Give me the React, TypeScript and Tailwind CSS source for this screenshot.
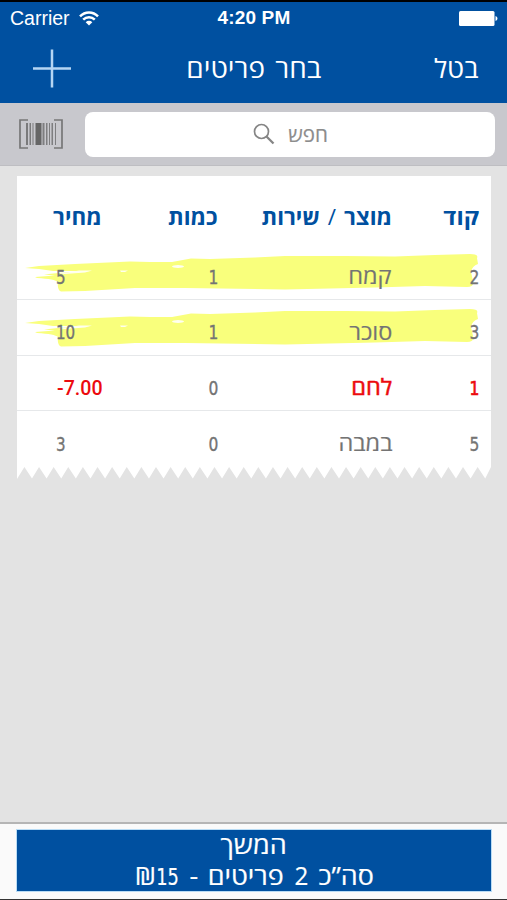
import React from "react";

type Item = { code: string; name: string; qty: string; price: string; marked?: boolean; negative?: boolean };

const items: Item[] = [
  { code: "2", name: "קמח", qty: "1", price: "5", marked: true },
  { code: "3", name: "סוכר", qty: "1", price: "10", marked: true },
  { code: "1", name: "לחם", qty: "0", price: "-7.00", negative: true },
  { code: "5", name: "במבה", qty: "0", price: "3" },
];

const GRID = "grid grid-cols-[87px_174px_117px_1fr] items-center pr-[12px]";
const DIGITS = "relative top-px inline-block font-['DejaVu_Sans_Condensed','DejaVu_Sans',sans-serif] text-[20px]";

function StatusBar() {
  return (
    <div dir="ltr" className="flex h-[32px] items-center justify-between pl-[10px] pr-[9px] pt-px font-['Liberation_Sans',Arial,sans-serif] text-white">
      <div className="flex w-[160px] items-center gap-[9px]">
        <span className="text-[19.5px]">Carrier</span>
        <svg width="20" height="15" viewBox="0 0 20 15" fill="none" stroke="white" strokeWidth="2.5">
          <path d="M1 5.300C6 .1 14 .1 19 5.300" />
          <path d="M4.200 8.700c3.300-3.200 8.300-3.200 11.600 0" />
          <path d="M6.700 11.200c1.900-1.800 4.700-1.800 6.600 0L10 14.600Z" fill="white" stroke="none" />
        </svg>
      </div>
      <span className="text-[19px] font-bold tracking-[0.15px]">4:20 PM</span>
      <div className="flex w-[160px] items-center justify-end">
        <svg width="39" height="15" viewBox="0 0 39 15" fill="white">
          <rect x="0" y="0" width="35.5" height="15" rx="1.5" />
          <path d="M36.500 5c2.600 1 2.600 4 0 5Z" />
        </svg>
      </div>
    </div>
  );
}

function Highlight() {
  return (
    <svg className="absolute left-[8px] top-[9px]" width="456" height="40" viewBox="0 0 456 40">
      <path
        fill="#f9ff7c"
        d="M0 14 L14 12 L50 10 L105 7.5 L125 8 L147 8 L166 4.5 L185 5 L230 3.5 L260 2 L320 2 L370 2.5 L410 1 L445 0 Q454 0 452 4 L453 10 Q447 12 446 18 L448 27 Q449 33 442 33 L400 32 L350 33.5 L260 35.5 L160 34 L110 34 L60 37 L36 37.5 Q32 36 33 28 Q30 25 12 24 L10 23 L30 21.5 L19 20.5 L33 19 L66 17 L28 17 L14 15 Z"
      />
      <g fill="#fffff0">
        <ellipse cx="153" cy="12.5" rx="6" ry="1.5" />
        <path d="M36 19.500 54 16.500 67 16.500 60 18.500 33 20.500ZM95 16.500h8l-3 1.500h-4Z" />
      </g>
    </svg>
  );
}

function Row({ item }: { item: Item }) {
  const color = item.negative ? "text-[#ec0a0e]" : "text-[#747474]";
  return (
    <div className={`relative h-[55.5px] border-b border-[#e6e8ea] last:border-b-0 ${color}`}>
      {item.marked && <Highlight />}
      <div className={`${GRID} relative h-full pt-[9px] leading-[28px]`}>
        <span>
          <span className={`${DIGITS} origin-right scale-x-[.86] ${item.negative ? "[-webkit-text-stroke:0.7px]" : "[-webkit-text-stroke:0.35px]"}`}>{item.code}</span>
        </span>
        <span className={`text-[22px] ${item.negative ? "[-webkit-text-stroke:0.5px]" : "[-webkit-text-stroke:0.15px]"}`}>
          <span className="relative -top-px inline-block origin-right scale-x-[1.07]">{item.name}</span>
        </span>
        <span className="text-[#747474]">
          <span className={`${DIGITS} origin-right scale-x-[.86] [-webkit-text-stroke:0.35px]`}>{item.qty}</span>
        </span>
        <span dir="ltr" className="ml-[40px] whitespace-nowrap text-left">
          {item.negative ? (
            <span className="relative top-px -mr-[20px] inline-block origin-left scale-x-[.98] font-[Roboto] text-[20px] font-medium">{item.price}</span>
          ) : (
            <span className={`${DIGITS} -ml-px origin-left scale-x-[.84] [-webkit-text-stroke:0.35px]`}>{item.price}</span>
          )}
        </span>
      </div>
    </div>
  );
}

export default function App() {
  return (
    <div dir="rtl" className="flex h-[900px] w-[507px] flex-col overflow-hidden border-b border-b-[#333] bg-[#e3e3e3] font-['Open_Sans','Liberation_Sans',sans-serif]">
      <header className="h-[103px] shrink-0 border-t-2 border-t-black bg-[#0050a0] text-white">
        <StatusBar />
        <div className="grid h-[69px] grid-cols-3 items-center px-[29px] text-[26px]">
          <button className="text-right"><span className="inline-block origin-right scale-x-[1.05]">בטל</span></button>
          <h1 className="scale-x-[1.07] text-center whitespace-nowrap [word-spacing:3px]">בחר פריטים</h1>
          <svg className="mr-auto ml-[3px]" width="40" height="40" viewBox="0 0 40 40" stroke="#b5d5f3" strokeWidth="2.5">
            <path d="M1 19.500h38M20 .5v38" />
          </svg>
        </div>
      </header>

      <div className="flex h-[63px] shrink-0 items-center gap-[21px] border-b border-[#bebec2] bg-[#c8c8cd] pr-[12px] pl-[18px]">
        <div className="flex h-[45px] flex-1 items-center justify-center gap-[13px] rounded-[8px] bg-white pl-px text-[#8c8c8c]">
          <span className="text-[20.5px] [-webkit-text-stroke:0.2px]">חפש</span>
          <svg width="22" height="22" viewBox="0 0 22 22" fill="none" stroke="#858585" strokeWidth="1.7">
            <circle cx="8.5" cy="8.5" r="7" />
            <path d="m13.500 13.500 7 7" strokeWidth="2.3" />
          </svg>
        </div>
        <svg width="46" height="32" viewBox="0 0 46 32" fill="none" stroke="#777">
          <path d="M10 2H2v28h8M36 2h8v28h-8" strokeWidth="1.7" />
          <g fill="#666" stroke="none">
            <path d="M8 5h2v22H8zM11.500 5h1.500v22h-1.500zM14.500 5h1v22h-1z" opacity=".8" />
            <path d="M17.500 5h6v22h-6z" />
            <path d="M24.500 5h2v22h-2zM28 5h1.500v22H28zM31 5h1v22h-1zM33.500 5h1.500v22h-1.500zM37 5h1v22h-1z" opacity=".75" />
          </g>
        </svg>
      </div>

      <main className="flex-1 px-[16px] pt-[9.500px] pl-[17px]">
        <section>
          <div className="bg-white">
            <div className={`${GRID} h-[69px] pt-[13px] text-[22px] font-bold text-[#0050a0] whitespace-nowrap`}>
              <span><span className="inline-block origin-right scale-x-[1.08]">קוד</span></span>
              <span><span className="inline-block origin-right scale-x-[1.02] [word-spacing:2px]">מוצר <span className="font-normal">/</span> שירות</span></span>
              <span><span className="inline-block origin-right scale-x-[1.02]">כמות</span></span>
              <span><span className="relative left-px inline-block origin-right scale-x-[1.02]">מחיר</span></span>
            </div>
            {items.map((item) => <Row key={item.code} item={item} />)}
          </div>
          <svg className="block" width="474" height="13" viewBox="0 0 474 13">
            <path
              fill="white"
              d={`M0 0V12${Array.from({ length: 32 }, (_, i) => `L${7.4 + i * 14.62} 0L${15 + i * 14.62} 11.5`).join("")}L474 0Z`}
            />
          </svg>
        </section>
      </main>

      <footer className="h-[77px] shrink-0 border-t-2 border-[#b5b5b5] bg-[#fafafa] pr-[16px] pl-[17px] pt-[6px]">
        <button className="flex h-[61px] w-full flex-col items-center bg-[#0050a0] text-[25px] leading-[31px] text-white outline outline-[#b9dcf5] [-webkit-text-stroke:0.2px]">
          <span className="relative -top-px scale-x-[1.08]">המשך</span>
          <span className="relative -top-px scale-x-[1.075] whitespace-nowrap [word-spacing:2.5px]">
            סה”כ <span className="inline-block scale-x-[.9] font-medium">2</span> פריטים - <span dir="ltr" className="inline-block">₪<span className="-mr-[4px] inline-block origin-left scale-x-[.8] font-['DejaVu_Sans_Condensed','DejaVu_Sans',sans-serif] text-[23px]">15</span></span>
          </span>
        </button>
      </footer>
    </div>
  );
}
